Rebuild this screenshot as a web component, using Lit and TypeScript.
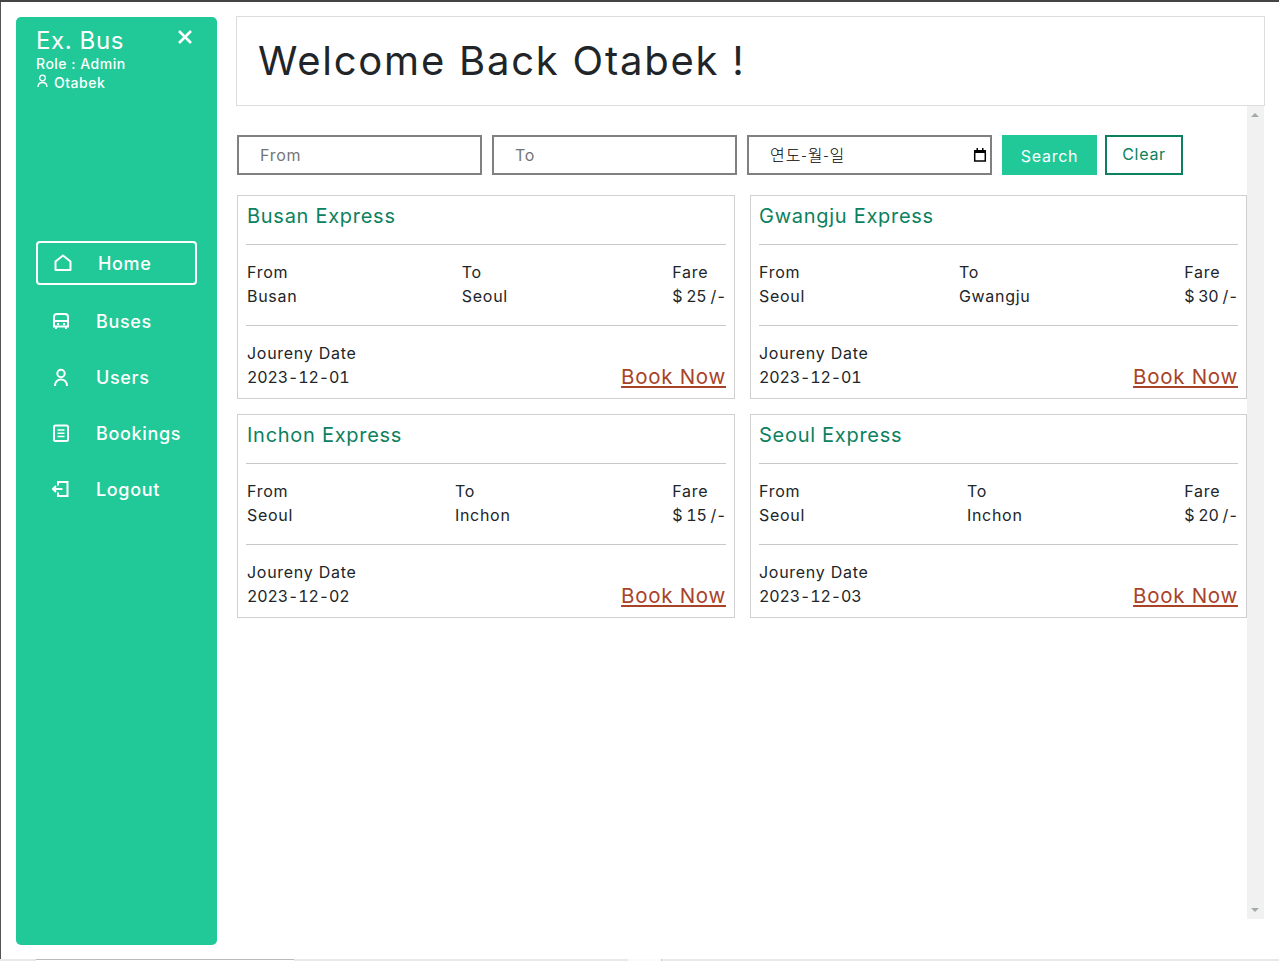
import { LitElement, html, svg, css } from "lit";
import { customElement } from "lit/decorators.js";

const cards = [
  { t: "Busan Express", a: "Busan", b: "Seoul", f: "$ 25 /-", d: "2023-12-01" },
  { t: "Gwangju Express", a: "Seoul", b: "Gwangju", f: "$ 30 /-", d: "2023-12-01" },
  { t: "Inchon Express", a: "Seoul", b: "Inchon", f: "$ 15 /-", d: "2023-12-02" },
  { t: "Seoul Express", a: "Seoul", b: "Inchon", f: "$ 20 /-", d: "2023-12-03" },
];

const icons: Record<string, unknown> = {
  home: svg`<path d="M2.500 8.500 10 2.500l7.500 6v8.500h-15z" stroke-linejoin="round" />`,
  bus: svg`<path d="M3 6c0-2 1-3 3-3h8c2 0 3 1 3 3v9.500H3zM3 10h14M5 15.500v2.500M15 15.500v2.500M6 13h2M12 13h2" />`,
  user: svg`<circle cx="10" cy="6.500" r="3.700"/><path d="M4 19c0-4 2.500-6.500 6-6.500s6 2.500 6 6.500"/>`,
  book: svg`<rect x="3" y="2.500" width="14" height="15.500" rx="1.500"/><path d="M6.500 7h7M6.500 10.200h7M6.500 13.400h7" stroke-width="1.500"/>`,
  out: svg`<path d="M7 6.500V3h9.500v14H7v-3.500M2 10h9.500M5 7l-3 3 3 3"/>`,
};

@customElement("app-root")
export class AppRoot extends LitElement {
  static styles = css`
    :host { display: block; height: 961px; overflow: hidden; box-sizing: border-box; border-top: 2px solid #444; font-family: Inter, "Liberation Sans", sans-serif; color: #212529; letter-spacing: 0.72px; }
    * { box-sizing: border-box; }
    .page { display: flex; align-items: flex-start; height: 957px; border-left: 1px solid #555; padding: 14px 14px 0 15px; gap: 19px; }
    .strip { display: flex; height: 2px; background: #e8e8e8; }
    .tab1 { width: 258px; margin-left: 36px; background: #fff; border-top: 1px solid #bbb; }
    .tab2 { width: 34px; margin-left: 334px; background: #fafafa; border-right: 1px solid #ccc; }
    .side { width: 201px; height: 928px; margin-top: 1px; flex: none; background: #20c997; border-radius: 5px; color: #fff; padding: 10px 20px; position: relative; font-weight: 500; }
    .brand { font-size: 24px; line-height: 28px; letter-spacing: 0.6px; font-weight: 400; }
    .role { font-size: 14px; line-height: 18px; letter-spacing: 0.5px; }
    .user { font-size: 14px; line-height: 19px; display: flex; align-items: center; gap: 6px; letter-spacing: 0.5px; }
    .user svg { margin-top: -3px; margin-left: 1px; }
    .close { position: absolute; right: 22px; top: 10px; width: 20px; height: 20px; }
    nav { margin-top: 149px; display: flex; flex-direction: column; }
    .item { display: flex; align-items: center; height: 44px; margin-bottom: 12px; padding-left: 13px; gap: 25px; font-size: 18px; border: 2px solid transparent; border-radius: 4px; letter-spacing: 0.65px; }
    .item.active { border-color: #fff; padding-left: 15px; margin-bottom: 14px; }
    .item svg { width: 20px; height: 20px; flex: none; }
    .main { flex: 1; min-width: 0; display: flex; flex-direction: column; }
    .head { height: 90px; border: 1px solid #dcdcdc; display: flex; align-items: center; padding: 0 0 2px 21px; font-size: 40px; color: #212529; flex: none; letter-spacing: 1.77px; }
    .body { display: flex; margin: 0 1px; height: 813px; flex: none; }
    .content { flex: 1; min-width: 0; padding-top: 29px; }
    .scroll { width: 17px; background: #f1f1f1; flex: none; position: relative; }
    .scroll i { position: absolute; left: 4px; width: 0; height: 0; border: 4px solid transparent; }
    .scroll .up { top: 3px; border-bottom-color: #a3aba3; }
    .scroll .down { bottom: 3px; border-top-color: #a3aba3; }
    .search { display: flex; height: 40px; align-items: stretch; }
    .field { width: 245px; margin-right: 10px; border: 2px solid #808080; font-size: 16px; color: #757575; padding-left: 21px; display: flex; align-items: center; }
    .field.date { color: #000; justify-content: space-between; padding: 0 2px 3px 21px; font-family: "Noto Sans CJK KR", "Open Sans", sans-serif; font-size: 16px; font-weight: 300; letter-spacing: 0.96px; }
    .field.date svg { margin-top: 3px; }
    .btn { width: 95px; background: #20c997; color: #fff; display: flex; align-items: center; justify-content: center; font-size: 16px; padding-top: 2px; }
    .btn.clear { margin-left: 8px; width: 78px; background: #fff; color: #0b8160; border: 2px solid #0b8160; padding: 0 0 2px; }
    .grid { display: grid; grid-template-columns: 498px 497px; gap: 15px; margin-top: 20px; }
    .card { height: 204px; border: 1px solid #d0d0d0; padding: 0 8px; display: flex; flex-direction: column; }
    .title { height: 49px; font-size: 20px; color: #0b8160; padding: 6px 0 0 1px; line-height: 28px; border-bottom: 1px solid #c8c8c8; }
    .route { height: 81px; display: flex; justify-content: space-between; font-size: 16px; line-height: 24px; padding: 15px 0 0 1px; border-bottom: 1px solid #c8c8c8; }
    .foot { flex: 1; display: flex; justify-content: space-between; align-items: flex-end; font-size: 16px; line-height: 24px; padding: 0 0 9px 1px; }
    .card:nth-child(even) .title, .card:nth-child(even) .route, .card:nth-child(even) .foot { padding-left: 0; }
    .book { font-size: 20.5px; color: #a8432a; text-decoration: underline; text-decoration-thickness: 2px; text-underline-offset: 2px; line-height: 24px; }
    .b { display: block; }
    .fare { letter-spacing: -0.3px; font-variant-numeric: tabular-nums; }
    .date { letter-spacing: -0.12px; font-variant-numeric: tabular-nums; }
  `;

  icon(name: string) {
    return html`<svg viewBox="0 0 20 20" fill="none" stroke="currentColor" stroke-width="2">${icons[name]}</svg>`;
  }

  render() {
    return html`<div class="page">
      <aside class="side">
        <div class="brand">Ex. Bus</div>
        <div class="role">Role : Admin</div>
        <div class="user"><svg width="11" height="14" viewBox="0 0 11 14" fill="none" stroke="#fff" stroke-width="1.300"><circle cx="5.500" cy="4" r="2.800"/><path d="M1 13c0-3 2-4.500 4.500-4.500s4.500 1.500 4.500 4.500"/></svg>Otabek</div>
        <svg class="close" viewBox="0 0 20 20" stroke="#fff" stroke-width="2.600"><path d="M4 4l12 12M16 4 4 16"/></svg>
        <nav>
          <div class="item active">${this.icon("home")}Home</div>
          <div class="item">${this.icon("bus")}Buses</div>
          <div class="item">${this.icon("user")}Users</div>
          <div class="item">${this.icon("book")}Bookings</div>
          <div class="item">${this.icon("out")}Logout</div>
        </nav>
      </aside>
      <main class="main">
        <div class="head">Welcome Back Otabek !</div>
        <div class="body">
          <div class="content">
            <div class="search">
              <div class="field">From</div>
              <div class="field">To</div>
              <div class="field date"><span>연도-월-일</span><svg width="16" height="16" viewBox="0 0 16 16"><path d="M2.700 4h10.600v10H2.700z" fill="none" stroke="#000" stroke-width="1.500"/><path d="M2 3h12v3H2zM4.500 1h1.500v3H4.500zM10 1h1.500v3H10z"/></svg></div>
              <div class="btn">Search</div>
              <div class="btn clear">Clear</div>
            </div>
            <div class="grid">
              ${cards.map((c) => html`<div class="card">
                <div class="title">${c.t}</div>
                <div class="route">
                  <div><span class="b">From</span><span class="b">${c.a}</span></div>
                  <div><span class="b">To</span><span class="b">${c.b}</span></div>
                  <div><span class="b">Fare</span><span class="b fare">${c.f}</span></div>
                </div>
                <div class="foot">
                  <div><span class="b">Joureny Date</span><span class="b date">${c.d}</span></div>
                  <span class="book">Book Now</span>
                </div>
              </div>`)}
            </div>
          </div>
          <div class="scroll"><i class="up"></i><i class="down"></i></div>
        </div>
      </main>
    </div>
    <div class="strip"><div class="tab1"></div><div class="tab2"></div></div>`;
  }
}
